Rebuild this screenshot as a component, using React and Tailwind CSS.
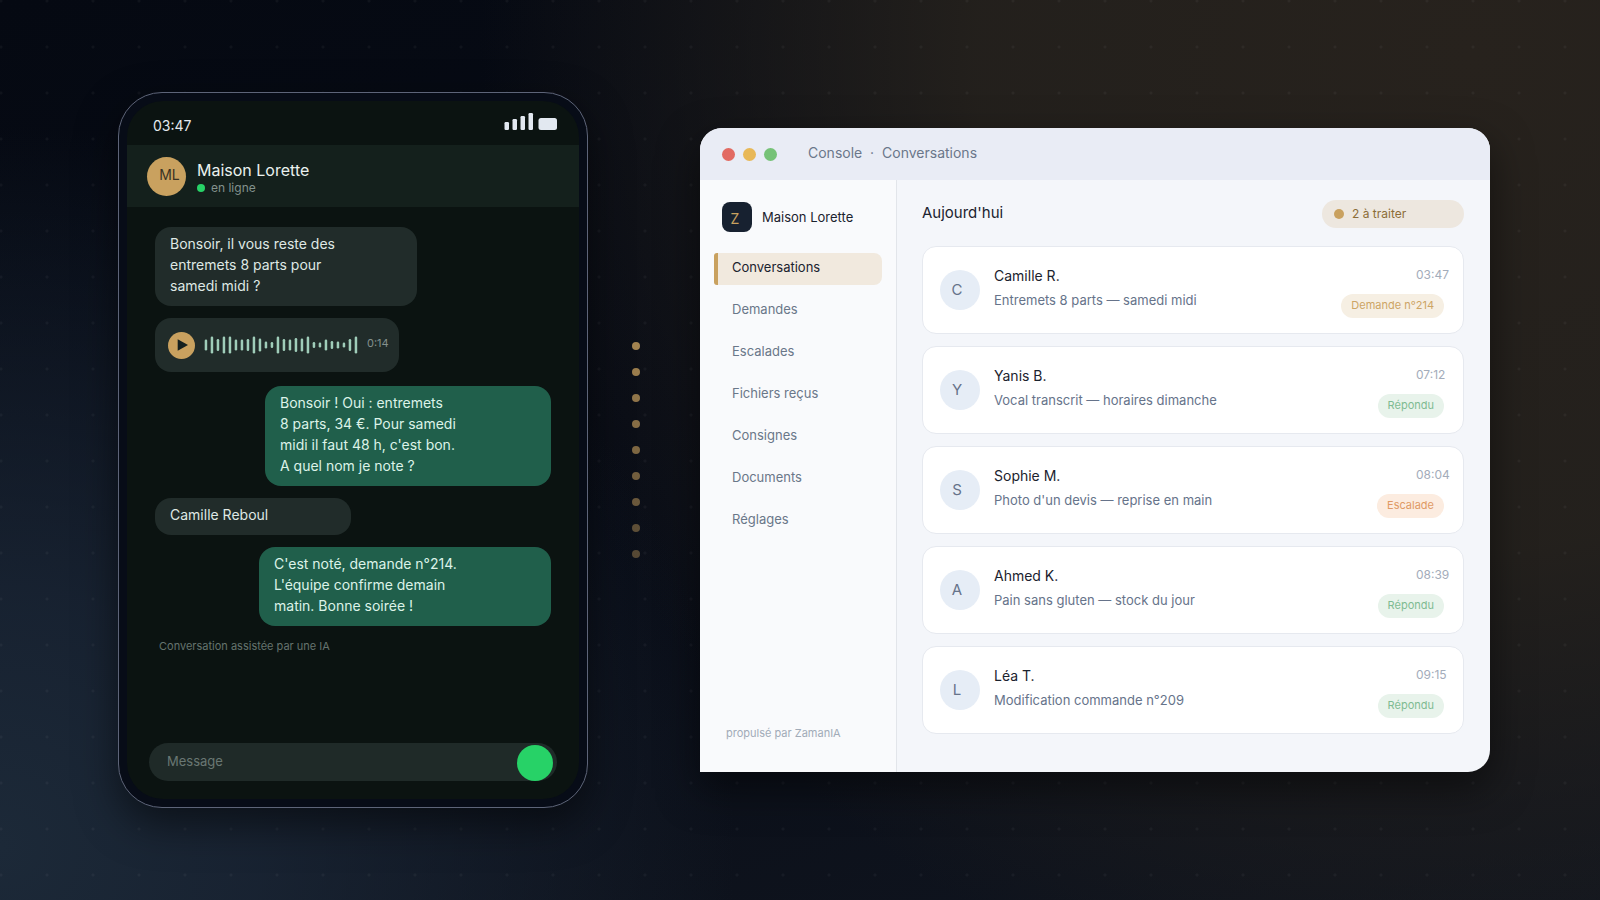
import clsx from "clsx";

const waveform = [
    11, 17, 12, 17, 17, 11, 11, 12, 17, 13, 7, 6, 17, 12, 11, 14, 13, 17, 6, 5,
    11, 8, 7, 5, 12, 17,
];

const navItems = [
    "Conversations",
    "Demandes",
    "Escalades",
    "Fichiers reçus",
    "Consignes",
    "Documents",
    "Réglages",
];

const conversations = [
    {
        name: "Camille R.",
        text: "Entremets 8 parts — samedi midi",
        time: "03:47",
        status: "Demande n°214",
        badge: "bg-[#f6efe3] text-[#cda565]",
    },
    {
        name: "Yanis B.",
        text: "Vocal transcrit — horaires dimanche",
        time: "07:12",
        status: "Répondu",
        badge: "bg-[#e8f3eb] text-[#7fbb92]",
    },
    {
        name: "Sophie M.",
        text: "Photo d'un devis — reprise en main",
        time: "08:04",
        status: "Escalade",
        badge: "bg-[#fcece0] text-[#e09a64]",
    },
    {
        name: "Ahmed K.",
        text: "Pain sans gluten — stock du jour",
        time: "08:39",
        status: "Répondu",
        badge: "bg-[#e8f3eb] text-[#7fbb92]",
    },
    {
        name: "Léa T.",
        text: "Modification commande n°209",
        time: "09:15",
        status: "Répondu",
        badge: "bg-[#e8f3eb] text-[#7fbb92]",
    },
];

const trail = [0.8, 0.75, 0.7, 0.65, 0.6, 0.55, 0.5, 0.44, 0.4];

function Bubble({ lines, sent, className }) {
    return (
        <div
            className={clsx(
                "rounded-2xl px-[15px] pt-1.5 pb-2.5 text-sm leading-[21px]",
                sent
                    ? "self-end bg-[#205f4b] text-[#dcf3e8]"
                    : "self-start bg-[#212c2a] text-[#dfe8e4]",
                className
            )}
        >
            {lines.map((line) => (
                <p key={line} className="whitespace-nowrap">
                    {line}
                </p>
            ))}
        </div>
    );
}

function VoiceMessage() {
    return (
        <div className="flex h-[54px] w-[244px] items-center self-start rounded-2xl bg-[#212c2a] pl-[13px]">
            <button
                type="button"
                aria-label="Lire le message vocal"
                className="flex size-[27px] items-center justify-center rounded-full bg-[#c9a15f]"
            >
                <svg viewBox="0 0 26 26" className="size-[26px]" fill="#14201f">
                    <path d="M8.7 7.2v11.6l10.3-5.8z" />
                </svg>
            </button>
            <svg
                viewBox="0 0 156 20"
                className="ml-[9px] h-5 w-[156px]"
                fill="#9fcdb9"
            >
                {waveform.map((h, i) => (
                    <rect
                        key={i}
                        x={i * 6 + 0.7}
                        y={10 - h / 2}
                        width="2.5"
                        height={h}
                        rx="1.2"
                    />
                ))}
            </svg>
            <span className="ml-[7px] pb-1 text-[11px] text-[#84918d]">0:14</span>
        </div>
    );
}

function Phone() {
    return (
        <section className="w-[470px] shrink-0 rounded-[44px] border border-[#5d6478] bg-[#070c17] p-2 shadow-[0_16px_40px_rgba(0,0,0,0.5)]">
            <div className="flex min-h-[698px] flex-col overflow-hidden rounded-[36px] bg-[#0b1311]">
                <div className="flex h-11 items-center justify-between pr-[22px] pl-[26px]">
                    <span className="pt-1.5 text-sm text-[#e3e9ee]">03:47</span>
                    <svg
                        viewBox="0 0 53 17"
                        className="mb-1 h-[17px] w-[53px]"
                        fill="#e2e8f0"
                    >
                        <rect x="0.5" y="9" width="4.5" height="8" rx="1.2" />
                        <rect x="8.5" y="6" width="4.5" height="11" rx="1.2" />
                        <rect x="16.5" y="3" width="4.5" height="14" rx="1.2" />
                        <rect x="24.5" y="0" width="4.5" height="17" rx="1.2" />
                        <rect x="34.5" y="5" width="18.5" height="12" rx="2.5" />
                    </svg>
                </div>

                <header className="flex h-[62px] items-center gap-[11px] bg-[#14201c] px-5">
                    <div className="flex size-[39px] items-center justify-center rounded-full bg-[#c9a15f] pb-0.5 pl-1.5 text-sm text-[#3a3324]">
                        ML
                    </div>
                    <div className="pt-1">
                        <h1 className="text-base leading-5 text-[#eaf1ee]">
                            Maison Lorette
                        </h1>
                        <p className="flex items-center gap-1.5 text-xs leading-4 text-[#82918c]">
                            <span className="size-2 rounded-full bg-[#27d267]" />
                            en ligne
                        </p>
                    </div>
                </header>

                <div className="flex flex-1 flex-col gap-3 px-7 pt-5">
                    <Bubble
                        className="w-[262px]"
                        lines={[
                            "Bonsoir, il vous reste des",
                            "entremets 8 parts pour",
                            "samedi midi ?",
                        ]}
                    />
                    <VoiceMessage />
                    <Bubble
                        sent
                        className="mt-0.5 w-[286px]"
                        lines={[
                            "Bonsoir ! Oui : entremets",
                            "8 parts, 34 €. Pour samedi",
                            "midi il faut 48 h, c'est bon.",
                            "A quel nom je note ?",
                        ]}
                    />
                    <Bubble className="w-[196px]" lines={["Camille Reboul"]} />
                    <Bubble
                        sent
                        className="w-[292px]"
                        lines={[
                            "C'est noté, demande n°214.",
                            "L'équipe confirme demain",
                            "matin. Bonne soirée !",
                        ]}
                    />
                    <p className="px-1 text-[11px] leading-4 text-[#65736e]">
                        Conversation assistée par une IA
                    </p>
                </div>

                <form className="mx-[22px] mb-[18px] flex h-[38px] items-end rounded-full bg-[#1f2a28] pr-1">
                    <input
                        type="text"
                        aria-label="Message"
                        placeholder="Message"
                        className="h-full min-w-0 flex-1 bg-transparent pb-0.5 pl-[18px] text-[13px] text-[#dfe8e4] outline-none placeholder:text-[#697773]"
                    />
                    <button
                        type="button"
                        aria-label="Envoyer"
                        className="size-9 rounded-full bg-[#27d267]"
                    />
                </form>
            </div>
        </section>
    );
}

function Sidebar() {
    return (
        <aside className="flex w-[197px] shrink-0 flex-col border-r border-[#e2e5ea] bg-[#f9fafc] pt-[22px] pb-[29px]">
            <div className="flex items-center gap-2.5 pl-[22px]">
                <div className="flex size-[30px] items-center justify-center rounded-lg bg-[#172130] pt-1 pr-1 text-sm text-[#c9a15f]">
                    Z
                </div>
                <span className="pt-0.5 text-[13px] text-[#1b222e]">
                    Maison Lorette
                </span>
            </div>
            <nav className="mt-[21px] flex flex-col gap-2.5 px-[14px]">
                {navItems.map((item, i) => (
                    <a
                        key={item}
                        href="#"
                        className={clsx(
                            "flex h-8 items-center border-l-4 pb-0.5 pl-[14px] text-[13px]",
                            i === 0
                                ? "rounded-l-[3px] rounded-r-lg border-[#c9a15f] bg-[#f1e9de] text-[#1b222e]"
                                : "border-transparent text-[#6a7789]"
                        )}
                    >
                        {item}
                    </a>
                ))}
            </nav>
            <p className="mt-auto pl-[26px] text-[11px] leading-5 text-[#a1abb8]">
                propulsé par ZamanIA
            </p>
        </aside>
    );
}

function ConversationRow({ item }) {
    return (
        <li className="flex h-[88px] items-center rounded-[14px] border border-[#e6e9ef] bg-white pr-[19px] pl-[17px]">
            <div className="flex size-10 items-center justify-center rounded-full bg-[#e6edf6] pr-1.5 text-[15px] text-[#66738a]">
                {item.name[0]}
            </div>
            <div className="ml-[14px] flex-1 pb-1">
                <h3 className="pb-1 text-sm leading-5 text-[#1b222e]">
                    {item.name}
                </h3>
                <p className="text-[13px] leading-5 text-[#66738a]">{item.text}</p>
            </div>
            <div className="flex flex-col items-end gap-[11px] pt-[5px]">
                <time className="w-7 text-xs leading-4 text-[#a3acba]">
                    {item.time}
                </time>
                <span
                    className={clsx(
                        "h-6 rounded-xl px-2.5 text-[11px] leading-[22px]",
                        item.badge
                    )}
                >
                    {item.status}
                </span>
            </div>
        </li>
    );
}

function ConsoleWindow() {
    return (
        <section className="flex min-h-[644px] min-w-0 flex-1 flex-col overflow-hidden rounded-[22px] rounded-bl-none bg-[#f4f6fa] shadow-[0_16px_40px_rgba(0,0,0,0.5)]">
            <div className="flex h-[52px] shrink-0 items-center bg-[#e9ecf5] pl-[22px]">
                <div className="flex gap-2">
                    <span className="size-[13px] rounded-full bg-[#e26a62]" />
                    <span className="size-[13px] rounded-full bg-[#e8b857]" />
                    <span className="size-[13px] rounded-full bg-[#76c277]" />
                </div>
                <span className="ml-[31px] pb-0.5 text-sm whitespace-pre text-[#6b778a]">
                    Console{"  ·  "}Conversations
                </span>
            </div>
            <div className="flex flex-1">
                <Sidebar />
                <main className="min-w-0 flex-1 px-[25px] pt-5 pr-[26px]">
                    <div className="flex h-7 items-center justify-between">
                        <h2 className="pb-0.5 text-[15px] text-[#1b222e]">
                            Aujourd'hui
                        </h2>
                        <div className="flex h-7 w-[142px] items-center gap-2 rounded-full bg-[#ede7df] pl-3 text-xs text-[#8c6d38]">
                            <span className="size-2.5 rounded-full bg-[#c9a15f]" />
                            2 à traiter
                        </div>
                    </div>
                    <ul className="mt-[18px] flex flex-col gap-3">
                        {conversations.map((item) => (
                            <ConversationRow key={item.name} item={item} />
                        ))}
                    </ul>
                </main>
            </div>
        </section>
    );
}

export default function App() {
    return (
        <div className="min-h-screen bg-[radial-gradient(ellipse_46%_80%_at_0%_94%,#1c2938_0%,#1b2737cc_35%,transparent_100%),radial-gradient(ellipse_62%_110%_at_92%_6%,#27221d_0%,#26221de6_50%,transparent_100%),linear-gradient(165deg,#050912_0%,#080c16_45%,#10151f_100%)] font-['Inter','Liberation_Sans',sans-serif]">
            <div className="flex min-h-screen items-center bg-[radial-gradient(circle,rgba(255,255,255,0.04)_1px,transparent_2px)] bg-size-[46px_46px] bg-position-[-22px_-22px] pr-[110px] pl-[118px]">
                <Phone />
                <div className="mr-[17px] flex w-[95px] shrink-0 flex-col items-center gap-[18px]">
                    {trail.map((opacity) => (
                        <span
                            key={opacity}
                            className="size-2 rounded-full bg-[#c9a15f]"
                            style={{ opacity }}
                        />
                    ))}
                </div>
                <ConsoleWindow />
            </div>
        </div>
    );
}
